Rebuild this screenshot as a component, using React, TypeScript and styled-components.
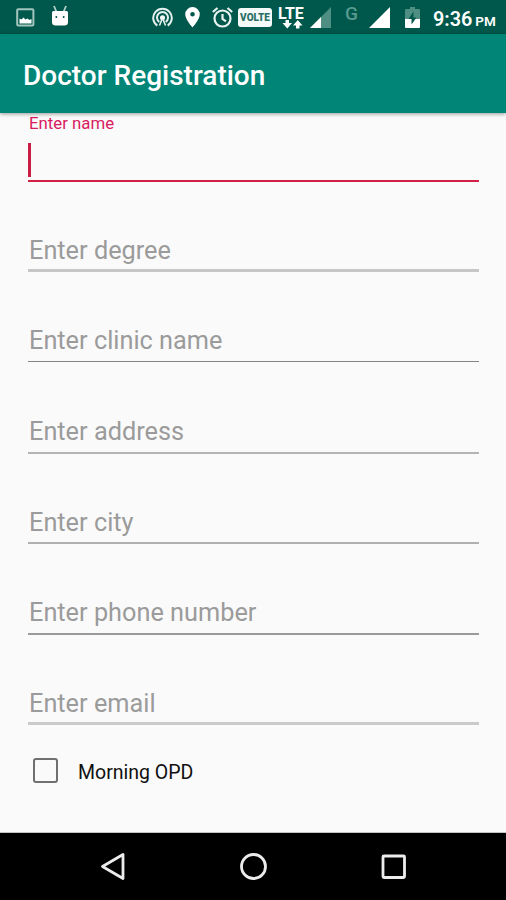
import React from "react";
import styled, { createGlobalStyle } from "styled-components";

const GlobalStyle = createGlobalStyle`
  * { box-sizing: border-box; }
  body { margin: 0; background: #fafafa; font-family: Roboto, "Liberation Sans", sans-serif; }
`;

const Screen = styled.div`
  width: 506px;
  height: 900px;
  display: flex;
  flex-direction: column;
  overflow: hidden;
  background: #fafafa;
`;

const StatusBar = styled.header`
  height: 34px;
  flex: none;
  display: flex;
  align-items: flex-start;
  background: #00574b;
  color: #fff;
`;

const StatusIcon = styled.svg<{ $gap: number; $top: number }>`
  display: block;
  flex: none;
  margin-left: ${(p) => p.$gap}px;
  margin-top: ${(p) => p.$top}px;
`;

const VolteBadge = styled.span`
  flex: none;
  width: 34px;
  height: 19px;
  margin: 8px 0 0 5px;
  border-radius: 3px;
  background: #f4faf9;
  color: #2b6f65;
  font-size: 10px;
  font-weight: 900;
  line-height: 19px;
  text-align: center;
`;

const Lte = styled.div`
  flex: none;
  width: 26px;
  margin: 6px 0 0 6px;
  display: flex;
  flex-direction: column;
`;

const LteText = styled.span`
  font-size: 16px;
  line-height: 15px;
  height: 14px;
  font-weight: 700;
  white-space: nowrap;
`;

const NetworkType = styled.span`
  flex: none;
  width: 14px;
  margin: 4px 0 0 14px;
  color: #579a8f;
  font-size: 19px;
  line-height: 20px;
  font-weight: 500;
`;

const Clock = styled.time`
  flex: none;
  margin: 8px 0 0 13px;
  font-size: 19.8px;
  line-height: 23px;
  font-weight: 600;
  white-space: nowrap;
`;

const Meridiem = styled.small`
  margin-left: 3px;
  font-size: 13.5px;
`;

const AppBar = styled.div`
  height: 79px;
  flex: none;
  padding: 4px 24px 0 23px;
  display: flex;
  align-items: center;
  background: #008577;
  box-shadow: 0 1px 4px rgba(0, 0, 0, 0.4);
  z-index: 1;
`;

const Title = styled.h1`
  margin: 0;
  color: #fff;
  font-size: 28px;
  line-height: 32px;
  font-weight: 500;
  white-space: nowrap;
`;

const Form = styled.main`
  flex: 1;
  padding: 0 27px 0 28px;
  display: flex;
  flex-direction: column;
  border-bottom: 1px solid #c4c4c4;
`;

const ActiveField = styled.label`
  height: 69px;
  flex: none;
  display: flex;
  flex-direction: column;
  border-bottom: 2px solid #d02045;
`;

const FloatingLabel = styled.span`
  height: 30px;
  padding-left: 1px;
  color: #d81b60;
  font-size: 16.8px;
  line-height: 20px;
`;

const Caret = styled.span`
  width: 3px;
  height: 34px;
  background: #c91d44;
`;

const Field = styled.label<{ $height: number; $weight: number; $rule: string; $drop: number }>`
  height: ${(p) => p.$height}px;
  flex: none;
  padding: 0 0 ${(p) => p.$drop}px 1px;
  display: flex;
  align-items: flex-end;
  border-bottom: ${(p) => p.$weight}px solid ${(p) => p.$rule};
  color: #9b9b9b;
  font-size: 25.3px;
  line-height: 30px;
  white-space: nowrap;
`;

const CheckRow = styled.label`
  margin-top: 33px;
  padding-left: 5px;
  display: flex;
  align-items: flex-start;
  gap: 20px;
  color: #101010;
  font-size: 19.5px;
  line-height: 30px;
`;

const Box = styled.span`
  width: 25px;
  height: 25px;
  border: 2px solid #707070;
  border-radius: 3px;
`;

const NavBar = styled.nav`
  height: 67px;
  flex: none;
  padding-top: 18px;
  display: flex;
  justify-content: center;
  gap: 110px;
  background: #000;
`;

const NavIcon = styled.svg`
  display: block;
  width: 30px;
  height: 30px;
  fill: none;
  stroke: #ececec;
  stroke-width: 2.8;
  stroke-linejoin: round;
`;

const fields = [
  { hint: "Enter degree", height: 90, weight: 3, drop: 3, rule: "#c6c6c6" },
  { hint: "Enter clinic name", height: 90, weight: 1, drop: 5, rule: "#858585" },
  { hint: "Enter address", height: 92, weight: 2, drop: 5, rule: "#b4b4b4" },
  { hint: "Enter city", height: 90, weight: 2, drop: 4, rule: "#b0b0b0" },
  { hint: "Enter phone number", height: 91, weight: 2, drop: 5, rule: "#9a9a9a" },
  { hint: "Enter email", height: 90, weight: 3, drop: 3, rule: "#cacaca" },
];

export default function App() {
  return (
    <Screen>
      <GlobalStyle />
      <StatusBar>
        <StatusIcon $gap={16} $top={8} width="19" height="19" viewBox="0 0 19 19">
          <rect x="1.2" y="1.2" width="16.2" height="16.2" rx="1" fill="none" stroke="#a3c5bf" strokeWidth="2" />
          <path d="M3.500 15.500v-5l2 1 2-2 2 2 2-1 2 1.500 2-1v4.500z" fill="#fff" />
        </StatusIcon>
        <StatusIcon $gap={16} $top={5} width="18" height="22" viewBox="0 0 18 22">
          <path d="M3 1l2.500 6M15 1l-2.500 6" stroke="#b4d0cb" strokeWidth="1.800" />
          <path d="M1 7.500q0-1.500 1.500-1.500h13q1.500 0 1.500 1.500V17q0 3.500-3.500 3.500h-9Q1 20.500 1 17z" fill="#fff" />
          <circle cx="5.300" cy="12" r="1" fill="#00574b" />
          <circle cx="12.700" cy="12" r="1" fill="#00574b" />
        </StatusIcon>
        <StatusIcon $gap={83} $top={7} width="21" height="21" viewBox="0 0 21 21" fill="none" stroke="#e4f0ee" strokeWidth="2">
          <path d="M5.300 18.700a9.300 9.300 0 1 1 10.400 0M7.300 15a5.500 5.500 0 1 1 6.400 0" />
          <circle cx="10.500" cy="10.800" r="2.500" fill="#fff" stroke="none" />
          <path d="M10.500 11l-3 7.500M10.500 11l3 7.500" strokeWidth="1.600" />
        </StatusIcon>
        <StatusIcon $gap={12} $top={7} width="15" height="21" viewBox="0 0 15 21">
          <path fillRule="evenodd" d="M7.500 0A7.300 7.300 0 0 0 .2 7.300C.2 12.500 7.500 20.500 7.500 20.500s7.300-8 7.300-13.200A7.300 7.300 0 0 0 7.500 0zm0 5a2.300 2.300 0 1 1 0 4.600 2.300 2.300 0 0 1 0-4.600z" fill="#fff" />
        </StatusIcon>
        <StatusIcon $gap={12} $top={7} width="21" height="21" viewBox="0 0 21 21" fill="none" stroke="#e8f3f1" strokeWidth="2.200">
          <circle cx="10.500" cy="11.500" r="8" />
          <path d="M10.500 7v5l3.500 2.300M.8 5l4.700-4M20.200 5l-4.700-4" />
        </StatusIcon>
        <VolteBadge>VOLTE</VolteBadge>
        <Lte>
          <LteText>LTE</LteText>
          <svg width="26" height="9" viewBox="0 0 26 9" fill="#fff">
            <path d="M7.500 0h3.500v3h3L9.250 8.500 4.500 3h3zM18 8.500h3.500v-3h3L19.750 0 15 5.500h3z" />
          </svg>
        </Lte>
        <StatusIcon $gap={6} $top={7} width="21" height="21" viewBox="0 0 21 21">
          <path d="M21 0v21H0z" fill="#4e8e83" />
          <path d="M11 10v11H0z" fill="#fff" />
        </StatusIcon>
        <NetworkType>G</NetworkType>
        <StatusIcon $gap={10} $top={7} width="21" height="21" viewBox="0 0 21 21">
          <path d="M21 0v21H0z" fill="#fff" />
        </StatusIcon>
        <StatusIcon $gap={15} $top={6} width="15" height="22" viewBox="0 0 15 22">
          <path d="M5 1h5v2h4q1 0 1 1v9H0V4q0-1 1-1h4z" fill="#4e8e83" />
          <path d="M0 13h15v8q0 1-1 1H1q-1 0-1-1z" fill="#fff" />
          <path d="M8.500 5.500v6h3L6.500 18.500v-5.500h-3z" fill="#00574b" />
        </StatusIcon>
        <Clock>9:36<Meridiem>PM</Meridiem></Clock>
      </StatusBar>
      <AppBar>
        <Title>Doctor Registration</Title>
      </AppBar>
      <Form>
        <ActiveField>
          <FloatingLabel>Enter name</FloatingLabel>
          <Caret />
        </ActiveField>
        {fields.map((f) => (
          <Field key={f.hint} $height={f.height} $weight={f.weight} $rule={f.rule} $drop={f.drop}>
            {f.hint}
          </Field>
        ))}
        <CheckRow>
          <Box />
          Morning OPD
        </CheckRow>
      </Form>
      <NavBar>
        <NavIcon viewBox="0 0 30 30">
          <path d="M25 3.500v24L4.500 15.500z" />
        </NavIcon>
        <NavIcon viewBox="0 0 30 30">
          <circle cx="15.500" cy="15.500" r="12" />
        </NavIcon>
        <NavIcon viewBox="0 0 30 30">
          <rect x="5" y="5" width="21.500" height="21.500" rx="1" />
        </NavIcon>
      </NavBar>
    </Screen>
  );
}
